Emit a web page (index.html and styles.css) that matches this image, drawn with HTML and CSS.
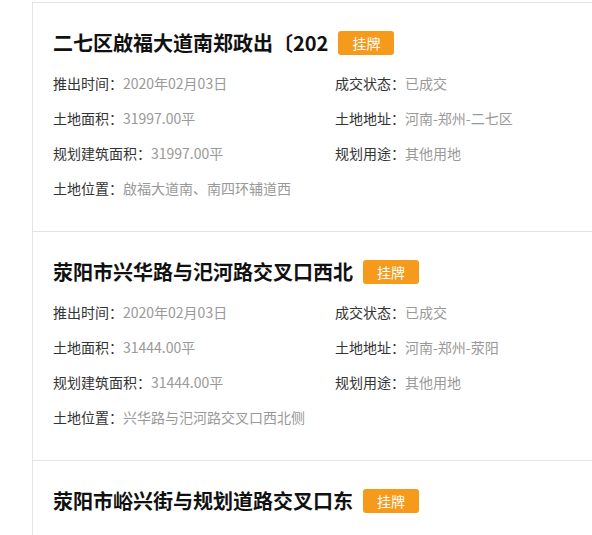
FILE: index.html
```html
<!DOCTYPE html>
<html lang="zh">
<head>
<meta charset="utf-8">
<link rel="stylesheet" href="styles.css">
</head>
<body>
<div class="list">
  <div class="card">
    <div class="title-row"><h2 class="title">二七区啟福大道南郑政出〔202</h2><span class="badge">挂牌</span></div>
    <div class="info">
      <div class="item"><span class="label">推出时间：</span><span class="value">2020年02月03日</span></div>
      <div class="item"><span class="label">成交状态：</span><span class="value">已成交</span></div>
      <div class="item"><span class="label">土地面积：</span><span class="value">31997.00平</span></div>
      <div class="item"><span class="label">土地地址：</span><span class="value">河南-郑州-二七区</span></div>
      <div class="item"><span class="label">规划建筑面积：</span><span class="value">31997.00平</span></div>
      <div class="item"><span class="label">规划用途：</span><span class="value">其他用地</span></div>
      <div class="item wide"><span class="label">土地位置：</span><span class="value">啟福大道南、南四环辅道西</span></div>
    </div>
  </div>
  <div class="card">
    <div class="title-row"><h2 class="title">荥阳市兴华路与汜河路交叉口西北</h2><span class="badge">挂牌</span></div>
    <div class="info">
      <div class="item"><span class="label">推出时间：</span><span class="value">2020年02月03日</span></div>
      <div class="item"><span class="label">成交状态：</span><span class="value">已成交</span></div>
      <div class="item"><span class="label">土地面积：</span><span class="value">31444.00平</span></div>
      <div class="item"><span class="label">土地地址：</span><span class="value">河南-郑州-荥阳</span></div>
      <div class="item"><span class="label">规划建筑面积：</span><span class="value">31444.00平</span></div>
      <div class="item"><span class="label">规划用途：</span><span class="value">其他用地</span></div>
      <div class="item wide"><span class="label">土地位置：</span><span class="value">兴华路与汜河路交叉口西北侧</span></div>
    </div>
  </div>
  <div class="card">
    <div class="title-row"><h2 class="title">荥阳市峪兴街与规划道路交叉口东</h2><span class="badge">挂牌</span></div>
  </div>
</div>
</body>
</html>
```
FILE: styles.css
```css
html, body {
  margin: 0;
  padding: 0;
  background: #fff;
}
body {
  font-family: "Noto Sans CJK SC", "Microsoft YaHei", sans-serif;
  overflow: hidden;
  height: 535px;
}
.list {
  box-sizing: border-box;
  margin-top: 2px;
  margin-left: 32px;
  height: 533px;
  overflow: hidden;
  border-left: 1px solid #e3e3e3;
  border-top: 1px solid #e3e3e3;
}
.card {
  padding: 22px 0 25px 20px;
  border-bottom: 1px solid #e3e3e3;
}
.title-row {
  display: flex;
  align-items: center;
  height: 36px;
  margin-bottom: 5px;
}
.title {
  margin: 0;
  font-size: 20px;
  font-weight: 700;
  color: #111;
  line-height: 36px;
  white-space: nowrap;
}
.badge {
  margin-left: 10px;
  width: 56px;
  height: 24px;
  line-height: 24px;
  text-align: center;
  background: #f59a1b;
  color: #fff;
  font-size: 14px;
  border-radius: 3px;
}
.info {
  display: grid;
  grid-template-columns: 282px 1fr;
}
.item {
  height: 35px;
  line-height: 35px;
  font-size: 14px;
  white-space: nowrap;
}
.item.wide {
  grid-column: 1 / span 2;
}
.label {
  color: #333;
}
.value {
  color: #999;
}
```
